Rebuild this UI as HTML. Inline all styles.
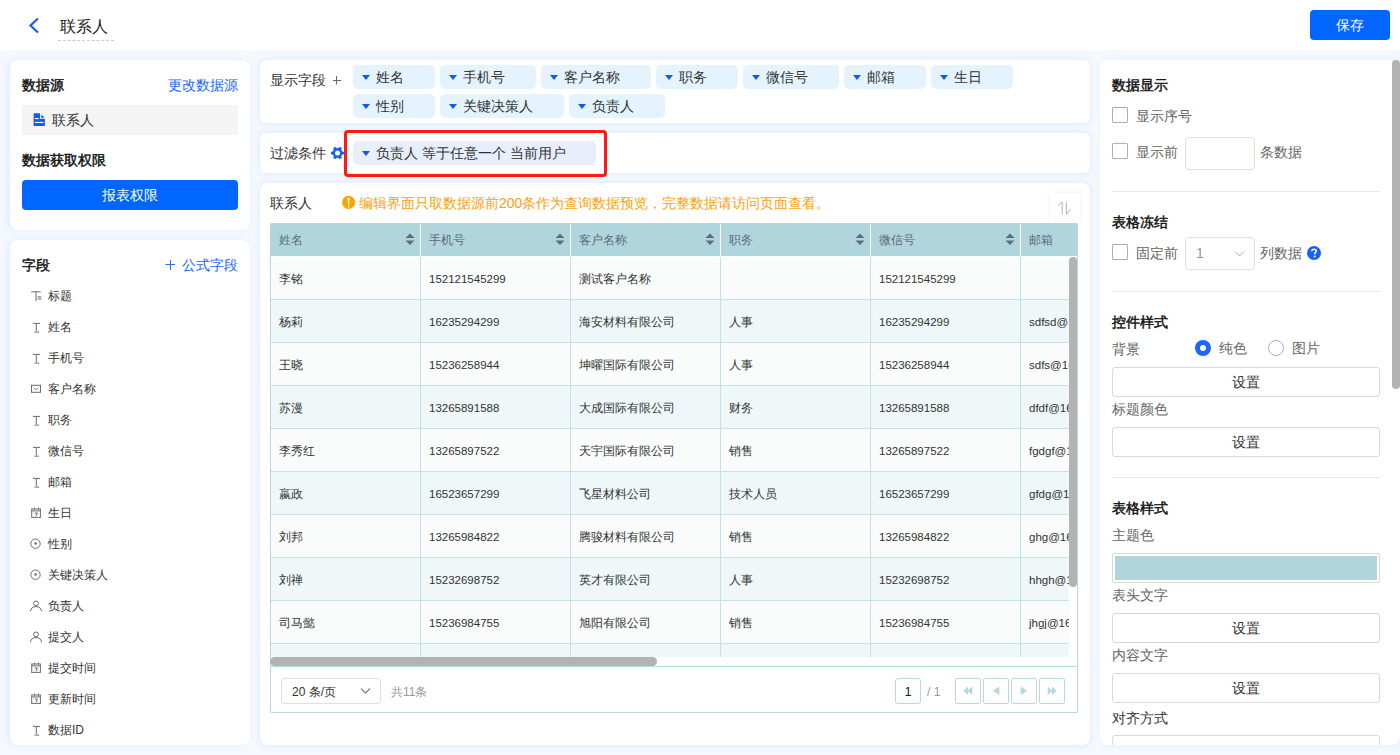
<!DOCTYPE html><html><head><meta charset="utf-8"><style>
*{box-sizing:border-box;margin:0;padding:0}
body{width:1400px;height:755px;overflow:hidden;position:relative;background:#f5f9fe;font-family:"Liberation Sans",sans-serif;color:#333;font-size:14px}
.ab{position:absolute}
.t{position:absolute;white-space:nowrap;line-height:20px}
.card{position:absolute;background:#fff;border-radius:8px;overflow:hidden;box-shadow:0 0 7px 1px rgba(20,140,250,0.11)}
.b{font-weight:400;-webkit-text-stroke:0.45px #111;color:#111}
.chip{position:absolute;height:24px;border-radius:5px;background:#e4f3fe;font-size:14px;line-height:24px;color:#333;white-space:nowrap}
.chip .tri{position:absolute;left:9px;top:10px;width:0;height:0;border-left:4.5px solid transparent;border-right:4.5px solid transparent;border-top:5px solid #0b5cf5}
.chip span{position:absolute;left:23px;top:0}
</style></head><body>
<div class="ab" style="left:0;top:0;width:1400px;height:50px;background:#fff"></div>
<svg class="ab" style="left:27px;top:16px" width="14" height="19" viewBox="0 0 14 19"><path d="M11 2.5 L3.5 9.5 L11 16.5" fill="none" stroke="#1460f7" stroke-width="2.2"/></svg>
<div class="t" style="left:60px;top:17px;font-size:16px;color:#222">联系人</div>
<div class="ab" style="left:58px;top:40px;width:56px;height:0;border-top:1px dashed #ccc"></div>
<div class="ab" style="left:1310px;top:10px;width:80px;height:30px;border-radius:4px;background:#0066ff;color:#fff;font-size:14px;line-height:30px;text-align:center">保存</div>
<div class="card" style="left:10px;top:60px;width:240px;height:170px;box-shadow:-2px 0 6px 1px rgba(20,140,250,0.085)">
<div class="t b" style="left:12px;top:15px">数据源</div>
<div class="t" style="right:12px;top:15px;color:#1a66ff">更改数据源</div>
<div class="ab" style="left:12px;top:45px;width:216px;height:30px;background:#f4f4f5;border-radius:2px"></div>
<svg class="ab" style="left:23px;top:53px" width="12" height="13" viewBox="0 0 12 13"><path d="M0.6 0.3 H7 V5.8 H11.9 V13 H0.6 Z" fill="#0b5ff7"/><path d="M8.3 1.2 L11.4 4.8 H8.3 Z" fill="#0b5ff7"/><rect x="1.8" y="5" width="4" height="1.1" fill="#fff"/><rect x="1.8" y="8.9" width="8.7" height="1.1" fill="#fff"/></svg>
<div class="t" style="left:42px;top:50px;color:#333">联系人</div>
<div class="t b" style="left:12px;top:90px">数据获取权限</div>
<div class="ab" style="left:12px;top:120px;width:216px;height:30px;border-radius:4px;background:#0066ff;color:#fff;line-height:30px;text-align:center">报表权限</div>
</div>
<div class="card" style="left:10px;top:240px;width:240px;height:505px;box-shadow:-2px 0 6px 1px rgba(20,140,250,0.085)">
<div class="t b" style="left:12px;top:15px">字段</div>
<svg class="ab" style="left:155px;top:20px" width="10" height="10" viewBox="0 0 10 10"><path d="M0.5 4.5 H10.5 M5.5 0 V10" stroke="#2a6fff" stroke-width="1"/></svg>
<div class="t" style="right:12px;top:15px;color:#1a66ff">公式字段</div>
<svg class="ab" style="left:18px;top:46.5px" width="18" height="18" viewBox="0 0 18 18"><path d="M3.2 4.8 H12.7 M8 4.8 V14.2 M9.5 9.9 H13.4 M9.5 12 H13.4" stroke="#6b6b6b" stroke-width="1" fill="none"/></svg>
<div class="t" style="left:38px;top:45.5px;font-size:12px;color:#333">标题</div>
<svg class="ab" style="left:18px;top:77.5px" width="18" height="18" viewBox="0 0 18 18"><path d="M5 5.4 H12 M8.3 5.4 V13 M6.4 14.1 H11.1" stroke="#6b6b6b" stroke-width="1" fill="none"/></svg>
<div class="t" style="left:38px;top:76.5px;font-size:12px;color:#333">姓名</div>
<svg class="ab" style="left:18px;top:108.5px" width="18" height="18" viewBox="0 0 18 18"><path d="M5 5.4 H12 M8.3 5.4 V13 M6.4 14.1 H11.1" stroke="#6b6b6b" stroke-width="1" fill="none"/></svg>
<div class="t" style="left:38px;top:107.5px;font-size:12px;color:#333">手机号</div>
<svg class="ab" style="left:18px;top:139.5px" width="18" height="18" viewBox="0 0 18 18"><rect x="3.5" y="5.3" width="9" height="7" stroke="#6b6b6b" fill="none"/><path d="M6 7.8 L8 9.8 L10 7.8" stroke="#6b6b6b" fill="none"/></svg>
<div class="t" style="left:38px;top:138.5px;font-size:12px;color:#333">客户名称</div>
<svg class="ab" style="left:18px;top:170.5px" width="18" height="18" viewBox="0 0 18 18"><path d="M5 5.4 H12 M8.3 5.4 V13 M6.4 14.1 H11.1" stroke="#6b6b6b" stroke-width="1" fill="none"/></svg>
<div class="t" style="left:38px;top:169.5px;font-size:12px;color:#333">职务</div>
<svg class="ab" style="left:18px;top:201.5px" width="18" height="18" viewBox="0 0 18 18"><path d="M5 5.4 H12 M8.3 5.4 V13 M6.4 14.1 H11.1" stroke="#6b6b6b" stroke-width="1" fill="none"/></svg>
<div class="t" style="left:38px;top:200.5px;font-size:12px;color:#333">微信号</div>
<svg class="ab" style="left:18px;top:232.5px" width="18" height="18" viewBox="0 0 18 18"><path d="M5 5.4 H12 M8.3 5.4 V13 M6.4 14.1 H11.1" stroke="#6b6b6b" stroke-width="1" fill="none"/></svg>
<div class="t" style="left:38px;top:231.5px;font-size:12px;color:#333">邮箱</div>
<svg class="ab" style="left:18px;top:263.5px" width="18" height="18" viewBox="0 0 18 18"><rect x="3.7" y="5" width="8.7" height="8.4" stroke="#6b6b6b" fill="none"/><path d="M3.7 6.9 H12.4 M6.5 3.6 V5.5 M10.5 3.6 V5.5 M6.6 9 H9.4 L7.9 12.4" stroke="#6b6b6b" fill="none"/></svg>
<div class="t" style="left:38px;top:262.5px;font-size:12px;color:#333">生日</div>
<svg class="ab" style="left:18px;top:294.5px" width="18" height="18" viewBox="0 0 18 18"><circle cx="7.5" cy="8.7" r="4.7" stroke="#6b6b6b" fill="none"/><circle cx="7.6" cy="8.5" r="1.2" fill="#6b6b6b"/></svg>
<div class="t" style="left:38px;top:293.5px;font-size:12px;color:#333">性别</div>
<svg class="ab" style="left:18px;top:325.5px" width="18" height="18" viewBox="0 0 18 18"><circle cx="7.5" cy="8.7" r="4.7" stroke="#6b6b6b" fill="none"/><circle cx="7.6" cy="8.5" r="1.2" fill="#6b6b6b"/></svg>
<div class="t" style="left:38px;top:324.5px;font-size:12px;color:#333">关键决策人</div>
<svg class="ab" style="left:18px;top:356.5px" width="18" height="18" viewBox="0 0 18 18"><circle cx="8" cy="6.4" r="2.4" stroke="#6b6b6b" fill="none"/><path d="M2.6 14.3 C2.6 11.5 4.5 9.6 8 9.6 C11.5 9.6 13.4 11.5 13.4 14.3" stroke="#6b6b6b" fill="none"/></svg>
<div class="t" style="left:38px;top:355.5px;font-size:12px;color:#333">负责人</div>
<svg class="ab" style="left:18px;top:387.5px" width="18" height="18" viewBox="0 0 18 18"><circle cx="8" cy="6.4" r="2.4" stroke="#6b6b6b" fill="none"/><path d="M2.6 14.3 C2.6 11.5 4.5 9.6 8 9.6 C11.5 9.6 13.4 11.5 13.4 14.3" stroke="#6b6b6b" fill="none"/></svg>
<div class="t" style="left:38px;top:386.5px;font-size:12px;color:#333">提交人</div>
<svg class="ab" style="left:18px;top:418.5px" width="18" height="18" viewBox="0 0 18 18"><rect x="3.7" y="5" width="8.7" height="8.4" stroke="#6b6b6b" fill="none"/><path d="M3.7 6.9 H12.4 M6.5 3.6 V5.5 M10.5 3.6 V5.5 M6.6 9 H9.4 L7.9 12.4" stroke="#6b6b6b" fill="none"/></svg>
<div class="t" style="left:38px;top:417.5px;font-size:12px;color:#333">提交时间</div>
<svg class="ab" style="left:18px;top:449.5px" width="18" height="18" viewBox="0 0 18 18"><rect x="3.7" y="5" width="8.7" height="8.4" stroke="#6b6b6b" fill="none"/><path d="M3.7 6.9 H12.4 M6.5 3.6 V5.5 M10.5 3.6 V5.5 M6.6 9 H9.4 L7.9 12.4" stroke="#6b6b6b" fill="none"/></svg>
<div class="t" style="left:38px;top:448.5px;font-size:12px;color:#333">更新时间</div>
<svg class="ab" style="left:18px;top:480.5px" width="18" height="18" viewBox="0 0 18 18"><path d="M5 5.4 H12 M8.3 5.4 V13 M6.4 14.1 H11.1" stroke="#6b6b6b" stroke-width="1" fill="none"/></svg>
<div class="t" style="left:38px;top:479.5px;font-size:12px;color:#333">数据ID</div>
</div>
<div class="card" style="left:260px;top:60px;width:830px;height:63px;border-radius:6px">
<div class="t" style="left:10px;top:10px">显示字段</div>
<svg class="ab" style="left:73px;top:16px" width="9" height="9" viewBox="0 0 9 9"><path d="M0 4.5 H8 M3.5 0 V8.5" stroke="#666" stroke-width="1"/></svg>
</div>
<div class="chip" style="left:353px;top:65px;width:82px"><i class="tri"></i><span>姓名</span></div>
<div class="chip" style="left:440px;top:65px;width:96px"><i class="tri"></i><span>手机号</span></div>
<div class="chip" style="left:541px;top:65px;width:110px"><i class="tri"></i><span>客户名称</span></div>
<div class="chip" style="left:656px;top:65px;width:82px"><i class="tri"></i><span>职务</span></div>
<div class="chip" style="left:743px;top:65px;width:96px"><i class="tri"></i><span>微信号</span></div>
<div class="chip" style="left:844px;top:65px;width:82px"><i class="tri"></i><span>邮箱</span></div>
<div class="chip" style="left:931px;top:65px;width:82px"><i class="tri"></i><span>生日</span></div>
<div class="chip" style="left:353px;top:94px;width:82px"><i class="tri"></i><span>性别</span></div>
<div class="chip" style="left:440px;top:94px;width:124px"><i class="tri"></i><span>关键决策人</span></div>
<div class="chip" style="left:569px;top:94px;width:96px"><i class="tri"></i><span>负责人</span></div>
<div class="card" style="left:260px;top:133px;width:830px;height:40px;border-radius:6px">
<div class="t" style="left:10px;top:10px">过滤条件</div>
</div>
<svg class="ab" style="left:331px;top:147px" width="13" height="12" viewBox="0 0 13 12"><g fill="#0f63f7"><circle cx="6.5" cy="6" r="4.9"/><circle cx="11.50" cy="6.00" r="1.6"/><circle cx="9.00" cy="10.33" r="1.6"/><circle cx="4.00" cy="10.33" r="1.6"/><circle cx="1.50" cy="6.00" r="1.6"/><circle cx="4.00" cy="1.67" r="1.6"/><circle cx="9.00" cy="1.67" r="1.6"/></g><circle cx="6.5" cy="6" r="2.5" fill="#fff"/></svg>
<div class="ab" style="left:344px;top:130px;width:263px;height:46.5px;border:3px solid #fc1a12;border-radius:4px"></div>
<div class="chip" style="left:353px;top:141px;width:243px;background:#e8eefb"><i class="tri"></i><span>负责人 等于任意一个 当前用户</span></div>
<div class="card" style="left:260px;top:183px;width:830px;height:562px">
<div class="t" style="left:10px;top:10px">联系人</div>
<svg class="ab" style="left:82px;top:13px" width="14" height="14" viewBox="0 0 14 14"><circle cx="6.6" cy="6.4" r="6.5" fill="#ffa304"/><path d="M5.6 1.8 H7.6 L7.1 9.2 H6.1 Z" fill="#fff"/><rect x="5.9" y="10.2" width="1.4" height="1.3" fill="#fff"/></svg>
<div class="t" style="left:99px;top:10px;color:#ffa010">编辑界面只取数据源前200条作为查询数据预览，完整数据请访问页面查看。</div>
<div class="ab" style="left:790px;top:10px;width:30px;height:30px;background:#fff;box-shadow:0 0 4px rgba(0,0,0,0.08)"></div>
<svg class="ab" style="left:798px;top:18px" width="14" height="14" viewBox="0 0 14 14"><path d="M0.4 4.6 L4.2 1 V13.2 M8.4 1 V13.2 L12.6 8.3" stroke="#a8a8a8" stroke-width="0.9" fill="none"/></svg>
</div>
<div class="ab" style="left:270px;top:223px;width:808px;height:490px;border:1px solid #b9d9df;border-radius:2px;background:#fff"></div>
<div class="ab" style="left:270px;top:223px;width:807px;height:33px;background:#b0d5dc;border-radius:2px 2px 0 0"></div>
<div class="t" style="left:279px;top:230px;font-size:12px;color:#5b6a7d">姓名</div>
<svg class="ab" style="left:405px;top:233px" width="10" height="13" viewBox="0 0 10 13"><path d="M5 0.5 L9.5 5 H0.5 Z M0.5 7.5 H9.5 L5 12 Z" fill="#5e6b80"/></svg>
<div class="ab" style="left:420px;top:224px;width:1px;height:32px;background:#fff"></div>
<div class="t" style="left:429px;top:230px;font-size:12px;color:#5b6a7d">手机号</div>
<svg class="ab" style="left:555px;top:233px" width="10" height="13" viewBox="0 0 10 13"><path d="M5 0.5 L9.5 5 H0.5 Z M0.5 7.5 H9.5 L5 12 Z" fill="#5e6b80"/></svg>
<div class="ab" style="left:570px;top:224px;width:1px;height:32px;background:#fff"></div>
<div class="t" style="left:579px;top:230px;font-size:12px;color:#5b6a7d">客户名称</div>
<svg class="ab" style="left:705px;top:233px" width="10" height="13" viewBox="0 0 10 13"><path d="M5 0.5 L9.5 5 H0.5 Z M0.5 7.5 H9.5 L5 12 Z" fill="#5e6b80"/></svg>
<div class="ab" style="left:720px;top:224px;width:1px;height:32px;background:#fff"></div>
<div class="t" style="left:729px;top:230px;font-size:12px;color:#5b6a7d">职务</div>
<svg class="ab" style="left:855px;top:233px" width="10" height="13" viewBox="0 0 10 13"><path d="M5 0.5 L9.5 5 H0.5 Z M0.5 7.5 H9.5 L5 12 Z" fill="#5e6b80"/></svg>
<div class="ab" style="left:870px;top:224px;width:1px;height:32px;background:#fff"></div>
<div class="t" style="left:879px;top:230px;font-size:12px;color:#5b6a7d">微信号</div>
<svg class="ab" style="left:1005px;top:233px" width="10" height="13" viewBox="0 0 10 13"><path d="M5 0.5 L9.5 5 H0.5 Z M0.5 7.5 H9.5 L5 12 Z" fill="#5e6b80"/></svg>
<div class="ab" style="left:1020px;top:224px;width:1px;height:32px;background:#fff"></div>
<div class="t" style="left:1029px;top:230px;font-size:12px;color:#5b6a7d">邮箱</div>
<div class="ab" style="left:270px;top:257px;width:799px;height:400px;overflow:hidden">
<div class="ab" style="left:0;top:0px;width:799px;height:43px;background:#fafcfc;border-bottom:1px solid #c6e0e5"></div>
<div class="ab" style="left:0px;top:0px;width:1px;height:43px;background:#b9d9df"></div>
<div class="t" style="left:9px;top:12px;font-size:12px;color:#333">李铭</div>
<div class="ab" style="left:150px;top:0px;width:1px;height:43px;background:#c6e0e5"></div>
<div class="t" style="left:159px;top:12px;font-size:11.5px;color:#333">152121545299</div>
<div class="ab" style="left:300px;top:0px;width:1px;height:43px;background:#c6e0e5"></div>
<div class="t" style="left:309px;top:12px;font-size:12px;color:#333">测试客户名称</div>
<div class="ab" style="left:450px;top:0px;width:1px;height:43px;background:#c6e0e5"></div>
<div class="ab" style="left:600px;top:0px;width:1px;height:43px;background:#c6e0e5"></div>
<div class="t" style="left:609px;top:12px;font-size:11.5px;color:#333">152121545299</div>
<div class="ab" style="left:750px;top:0px;width:1px;height:43px;background:#c6e0e5"></div>
<div class="ab" style="left:0;top:43px;width:799px;height:43px;background:#eff7f9;border-bottom:1px solid #c6e0e5"></div>
<div class="ab" style="left:0px;top:43px;width:1px;height:43px;background:#b9d9df"></div>
<div class="t" style="left:9px;top:55px;font-size:12px;color:#333">杨莉</div>
<div class="ab" style="left:150px;top:43px;width:1px;height:43px;background:#c6e0e5"></div>
<div class="t" style="left:159px;top:55px;font-size:11.5px;color:#333">16235294299</div>
<div class="ab" style="left:300px;top:43px;width:1px;height:43px;background:#c6e0e5"></div>
<div class="t" style="left:309px;top:55px;font-size:12px;color:#333">海安材料有限公司</div>
<div class="ab" style="left:450px;top:43px;width:1px;height:43px;background:#c6e0e5"></div>
<div class="t" style="left:459px;top:55px;font-size:12px;color:#333">人事</div>
<div class="ab" style="left:600px;top:43px;width:1px;height:43px;background:#c6e0e5"></div>
<div class="t" style="left:609px;top:55px;font-size:11.5px;color:#333">16235294299</div>
<div class="ab" style="left:750px;top:43px;width:1px;height:43px;background:#c6e0e5"></div>
<div class="t" style="left:759px;top:55px;font-size:11.5px;color:#333">sdfsd@163.com</div>
<div class="ab" style="left:0;top:86px;width:799px;height:43px;background:#fafcfc;border-bottom:1px solid #c6e0e5"></div>
<div class="ab" style="left:0px;top:86px;width:1px;height:43px;background:#b9d9df"></div>
<div class="t" style="left:9px;top:98px;font-size:12px;color:#333">王晓</div>
<div class="ab" style="left:150px;top:86px;width:1px;height:43px;background:#c6e0e5"></div>
<div class="t" style="left:159px;top:98px;font-size:11.5px;color:#333">15236258944</div>
<div class="ab" style="left:300px;top:86px;width:1px;height:43px;background:#c6e0e5"></div>
<div class="t" style="left:309px;top:98px;font-size:12px;color:#333">坤曜国际有限公司</div>
<div class="ab" style="left:450px;top:86px;width:1px;height:43px;background:#c6e0e5"></div>
<div class="t" style="left:459px;top:98px;font-size:12px;color:#333">人事</div>
<div class="ab" style="left:600px;top:86px;width:1px;height:43px;background:#c6e0e5"></div>
<div class="t" style="left:609px;top:98px;font-size:11.5px;color:#333">15236258944</div>
<div class="ab" style="left:750px;top:86px;width:1px;height:43px;background:#c6e0e5"></div>
<div class="t" style="left:759px;top:98px;font-size:11.5px;color:#333">sdfs@163.com</div>
<div class="ab" style="left:0;top:129px;width:799px;height:43px;background:#eff7f9;border-bottom:1px solid #c6e0e5"></div>
<div class="ab" style="left:0px;top:129px;width:1px;height:43px;background:#b9d9df"></div>
<div class="t" style="left:9px;top:141px;font-size:12px;color:#333">苏漫</div>
<div class="ab" style="left:150px;top:129px;width:1px;height:43px;background:#c6e0e5"></div>
<div class="t" style="left:159px;top:141px;font-size:11.5px;color:#333">13265891588</div>
<div class="ab" style="left:300px;top:129px;width:1px;height:43px;background:#c6e0e5"></div>
<div class="t" style="left:309px;top:141px;font-size:12px;color:#333">大成国际有限公司</div>
<div class="ab" style="left:450px;top:129px;width:1px;height:43px;background:#c6e0e5"></div>
<div class="t" style="left:459px;top:141px;font-size:12px;color:#333">财务</div>
<div class="ab" style="left:600px;top:129px;width:1px;height:43px;background:#c6e0e5"></div>
<div class="t" style="left:609px;top:141px;font-size:11.5px;color:#333">13265891588</div>
<div class="ab" style="left:750px;top:129px;width:1px;height:43px;background:#c6e0e5"></div>
<div class="t" style="left:759px;top:141px;font-size:11.5px;color:#333">dfdf@163.com</div>
<div class="ab" style="left:0;top:172px;width:799px;height:43px;background:#fafcfc;border-bottom:1px solid #c6e0e5"></div>
<div class="ab" style="left:0px;top:172px;width:1px;height:43px;background:#b9d9df"></div>
<div class="t" style="left:9px;top:184px;font-size:12px;color:#333">李秀红</div>
<div class="ab" style="left:150px;top:172px;width:1px;height:43px;background:#c6e0e5"></div>
<div class="t" style="left:159px;top:184px;font-size:11.5px;color:#333">13265897522</div>
<div class="ab" style="left:300px;top:172px;width:1px;height:43px;background:#c6e0e5"></div>
<div class="t" style="left:309px;top:184px;font-size:12px;color:#333">天宇国际有限公司</div>
<div class="ab" style="left:450px;top:172px;width:1px;height:43px;background:#c6e0e5"></div>
<div class="t" style="left:459px;top:184px;font-size:12px;color:#333">销售</div>
<div class="ab" style="left:600px;top:172px;width:1px;height:43px;background:#c6e0e5"></div>
<div class="t" style="left:609px;top:184px;font-size:11.5px;color:#333">13265897522</div>
<div class="ab" style="left:750px;top:172px;width:1px;height:43px;background:#c6e0e5"></div>
<div class="t" style="left:759px;top:184px;font-size:11.5px;color:#333">fgdgf@163.com</div>
<div class="ab" style="left:0;top:215px;width:799px;height:43px;background:#eff7f9;border-bottom:1px solid #c6e0e5"></div>
<div class="ab" style="left:0px;top:215px;width:1px;height:43px;background:#b9d9df"></div>
<div class="t" style="left:9px;top:227px;font-size:12px;color:#333">嬴政</div>
<div class="ab" style="left:150px;top:215px;width:1px;height:43px;background:#c6e0e5"></div>
<div class="t" style="left:159px;top:227px;font-size:11.5px;color:#333">16523657299</div>
<div class="ab" style="left:300px;top:215px;width:1px;height:43px;background:#c6e0e5"></div>
<div class="t" style="left:309px;top:227px;font-size:12px;color:#333">飞星材料公司</div>
<div class="ab" style="left:450px;top:215px;width:1px;height:43px;background:#c6e0e5"></div>
<div class="t" style="left:459px;top:227px;font-size:12px;color:#333">技术人员</div>
<div class="ab" style="left:600px;top:215px;width:1px;height:43px;background:#c6e0e5"></div>
<div class="t" style="left:609px;top:227px;font-size:11.5px;color:#333">16523657299</div>
<div class="ab" style="left:750px;top:215px;width:1px;height:43px;background:#c6e0e5"></div>
<div class="t" style="left:759px;top:227px;font-size:11.5px;color:#333">gfdg@163.com</div>
<div class="ab" style="left:0;top:258px;width:799px;height:43px;background:#fafcfc;border-bottom:1px solid #c6e0e5"></div>
<div class="ab" style="left:0px;top:258px;width:1px;height:43px;background:#b9d9df"></div>
<div class="t" style="left:9px;top:270px;font-size:12px;color:#333">刘邦</div>
<div class="ab" style="left:150px;top:258px;width:1px;height:43px;background:#c6e0e5"></div>
<div class="t" style="left:159px;top:270px;font-size:11.5px;color:#333">13265984822</div>
<div class="ab" style="left:300px;top:258px;width:1px;height:43px;background:#c6e0e5"></div>
<div class="t" style="left:309px;top:270px;font-size:12px;color:#333">腾骏材料有限公司</div>
<div class="ab" style="left:450px;top:258px;width:1px;height:43px;background:#c6e0e5"></div>
<div class="t" style="left:459px;top:270px;font-size:12px;color:#333">销售</div>
<div class="ab" style="left:600px;top:258px;width:1px;height:43px;background:#c6e0e5"></div>
<div class="t" style="left:609px;top:270px;font-size:11.5px;color:#333">13265984822</div>
<div class="ab" style="left:750px;top:258px;width:1px;height:43px;background:#c6e0e5"></div>
<div class="t" style="left:759px;top:270px;font-size:11.5px;color:#333">ghg@163.com</div>
<div class="ab" style="left:0;top:301px;width:799px;height:43px;background:#eff7f9;border-bottom:1px solid #c6e0e5"></div>
<div class="ab" style="left:0px;top:301px;width:1px;height:43px;background:#b9d9df"></div>
<div class="t" style="left:9px;top:313px;font-size:12px;color:#333">刘禅</div>
<div class="ab" style="left:150px;top:301px;width:1px;height:43px;background:#c6e0e5"></div>
<div class="t" style="left:159px;top:313px;font-size:11.5px;color:#333">15232698752</div>
<div class="ab" style="left:300px;top:301px;width:1px;height:43px;background:#c6e0e5"></div>
<div class="t" style="left:309px;top:313px;font-size:12px;color:#333">英才有限公司</div>
<div class="ab" style="left:450px;top:301px;width:1px;height:43px;background:#c6e0e5"></div>
<div class="t" style="left:459px;top:313px;font-size:12px;color:#333">人事</div>
<div class="ab" style="left:600px;top:301px;width:1px;height:43px;background:#c6e0e5"></div>
<div class="t" style="left:609px;top:313px;font-size:11.5px;color:#333">15232698752</div>
<div class="ab" style="left:750px;top:301px;width:1px;height:43px;background:#c6e0e5"></div>
<div class="t" style="left:759px;top:313px;font-size:11.5px;color:#333">hhgh@163.com</div>
<div class="ab" style="left:0;top:344px;width:799px;height:43px;background:#fafcfc;border-bottom:1px solid #c6e0e5"></div>
<div class="ab" style="left:0px;top:344px;width:1px;height:43px;background:#b9d9df"></div>
<div class="t" style="left:9px;top:356px;font-size:12px;color:#333">司马懿</div>
<div class="ab" style="left:150px;top:344px;width:1px;height:43px;background:#c6e0e5"></div>
<div class="t" style="left:159px;top:356px;font-size:11.5px;color:#333">15236984755</div>
<div class="ab" style="left:300px;top:344px;width:1px;height:43px;background:#c6e0e5"></div>
<div class="t" style="left:309px;top:356px;font-size:12px;color:#333">旭阳有限公司</div>
<div class="ab" style="left:450px;top:344px;width:1px;height:43px;background:#c6e0e5"></div>
<div class="t" style="left:459px;top:356px;font-size:12px;color:#333">销售</div>
<div class="ab" style="left:600px;top:344px;width:1px;height:43px;background:#c6e0e5"></div>
<div class="t" style="left:609px;top:356px;font-size:11.5px;color:#333">15236984755</div>
<div class="ab" style="left:750px;top:344px;width:1px;height:43px;background:#c6e0e5"></div>
<div class="t" style="left:759px;top:356px;font-size:11.5px;color:#333">jhgj@163.com</div>
<div class="ab" style="left:0;top:387px;width:799px;height:43px;background:#eff7f9;border-bottom:1px solid #c6e0e5"></div>
<div class="ab" style="left:0px;top:387px;width:1px;height:43px;background:#b9d9df"></div>
<div class="t" style="left:9px;top:399px;font-size:12px;color:#333">曹操</div>
<div class="ab" style="left:150px;top:387px;width:1px;height:43px;background:#c6e0e5"></div>
<div class="t" style="left:159px;top:399px;font-size:11.5px;color:#333">15236984756</div>
<div class="ab" style="left:300px;top:387px;width:1px;height:43px;background:#c6e0e5"></div>
<div class="t" style="left:309px;top:399px;font-size:12px;color:#333">曹魏有限公司</div>
<div class="ab" style="left:450px;top:387px;width:1px;height:43px;background:#c6e0e5"></div>
<div class="t" style="left:459px;top:399px;font-size:12px;color:#333">销售</div>
<div class="ab" style="left:600px;top:387px;width:1px;height:43px;background:#c6e0e5"></div>
<div class="t" style="left:609px;top:399px;font-size:11.5px;color:#333">15236984756</div>
<div class="ab" style="left:750px;top:387px;width:1px;height:43px;background:#c6e0e5"></div>
<div class="t" style="left:759px;top:399px;font-size:11.5px;color:#333">cc@163.com</div>
</div>
<div class="ab" style="left:1069px;top:257px;width:8px;height:330px;background:#b3b3b3;border-radius:4px"></div>
<div class="ab" style="left:270px;top:657px;width:387px;height:9px;background:#b3b3b3;border-radius:4.5px"></div>
<div class="ab" style="left:270px;top:666px;width:808px;height:1px;background:#b9d9df"></div>
<div class="ab" style="left:281px;top:678px;width:100px;height:26px;border:1px solid #dcdfe6;border-radius:3px;background:#fff"></div>
<div class="t" style="left:292px;top:682px;font-size:12px;color:#333">20 条/页</div>
<svg class="ab" style="left:360px;top:687px" width="11" height="8" viewBox="0 0 11 8"><path d="M1 1.5 L5.5 6 L10 1.5" stroke="#888" stroke-width="1.3" fill="none"/></svg>
<div class="t" style="left:391px;top:682px;font-size:12px;color:#999">共11条</div>
<div class="ab" style="left:895px;top:678px;width:26px;height:26px;border:1px solid #b9d9df;border-radius:3px;background:#fff;font-size:12px;line-height:25px;text-align:center;color:#111"><span style="position:relative;top:1px">1</span></div>
<div class="t" style="left:927px;top:682px;font-size:12px;color:#999">/ 1</div>
<div class="ab" style="left:955px;top:678px;width:26px;height:26px;border:1px solid #b9d9df;border-radius:2px;background:#fff"></div>
<svg class="ab" style="left:960px;top:684px" width="16" height="13" viewBox="0 0 16 13"><path d="M8 2.6 L3.3 6.8 L8 11 Z M12.3 2.6 L7.6 6.8 L12.3 11 Z" fill="#b5d8df"/></svg>
<div class="ab" style="left:983px;top:678px;width:26px;height:26px;border:1px solid #b9d9df;border-radius:2px;background:#fff"></div>
<svg class="ab" style="left:988px;top:684px" width="16" height="13" viewBox="0 0 16 13"><path d="M11.3 2.6 L4.8 6.8 L11.3 11 Z" fill="#b5d8df"/></svg>
<div class="ab" style="left:1011px;top:678px;width:26px;height:26px;border:1px solid #b9d9df;border-radius:2px;background:#fff"></div>
<svg class="ab" style="left:1016px;top:684px" width="16" height="13" viewBox="0 0 16 13"><path d="M4.7 2.6 L11.2 6.8 L4.7 11 Z" fill="#b5d8df"/></svg>
<div class="ab" style="left:1039px;top:678px;width:26px;height:26px;border:1px solid #b9d9df;border-radius:2px;background:#fff"></div>
<svg class="ab" style="left:1044px;top:684px" width="16" height="13" viewBox="0 0 16 13"><path d="M3.7 2.6 L8.4 6.8 L3.7 11 Z M8 2.6 L12.7 6.8 L8 11 Z" fill="#b5d8df"/></svg>
<div class="card" style="left:1100px;top:60px;width:300px;height:685px;box-shadow:3px 0 6px 1px rgba(20,170,250,0.09)">
<div class="t" style="left:12px;top:15px;-webkit-text-stroke:0.45px #111;color:#111">数据显示</div>
<div class="ab" style="left:12px;top:47px;width:16px;height:16px;border:1px solid #a9afbd;border-radius:1px;background:#fff"></div>
<div class="t" style="left:36px;top:46px;color:#666">显示序号</div>
<div class="ab" style="left:12px;top:83px;width:16px;height:16px;border:1px solid #a9afbd;border-radius:1px;background:#fff"></div>
<div class="t" style="left:36px;top:82px;color:#666">显示前</div>
<div class="ab" style="left:85px;top:77px;width:70px;height:33px;border:1px solid #dedede;border-radius:4px"></div>
<div class="t" style="left:160px;top:82px;color:#666">条数据</div>
<div class="ab" style="left:12px;top:131px;width:268px;height:1px;background:#e8e8e8"></div>
<div class="t" style="left:12px;top:152px;-webkit-text-stroke:0.45px #111;color:#111">表格冻结</div>
<div class="ab" style="left:12px;top:184px;width:16px;height:16px;border:1px solid #a9afbd;border-radius:1px;background:#fff"></div>
<div class="t" style="left:36px;top:183px;color:#666">固定前</div>
<div class="ab" style="left:85px;top:177px;width:70px;height:33px;border:1px solid #dedede;border-radius:4px"></div>
<div class="t" style="left:96px;top:183px;color:#999">1</div>
<svg class="ab" style="left:134px;top:190px" width="11" height="8" viewBox="0 0 11 8"><path d="M1 1.5 L5.5 6 L10 1.5" stroke="#aaa" stroke-width="1" fill="none"/></svg>
<div class="t" style="left:160px;top:183px;color:#666">列数据</div>
<svg class="ab" style="left:207px;top:186px" width="14" height="14" viewBox="0 0 14 14"><circle cx="7" cy="7" r="7" fill="#1961f5"/><path d="M4.8 5.3 C4.8 3.9 5.8 3.2 7 3.2 C8.3 3.2 9.2 4 9.2 5.1 C9.2 6.5 7.6 6.6 7.6 8.2" stroke="#fff" stroke-width="1.6" fill="none"/><circle cx="7.6" cy="10.5" r="0.95" fill="#fff"/></svg>
<div class="ab" style="left:12px;top:231px;width:268px;height:1px;background:#e8e8e8"></div>
<div class="t" style="left:12px;top:252px;-webkit-text-stroke:0.45px #111;color:#111">控件样式</div>
<div class="t" style="left:12px;top:279px;color:#666">背景</div>
<div class="ab" style="left:95px;top:280px;width:16px;height:16px;border-radius:50%;border:5px solid #1a66ff;background:#fff"></div>
<div class="t" style="left:119px;top:278px;color:#666">纯色</div>
<div class="ab" style="left:168px;top:280px;width:16px;height:16px;border-radius:50%;border:1px solid #a9afbd;background:#fff"></div>
<div class="t" style="left:192px;top:278px;color:#666">图片</div>
<div class="ab" style="left:12px;top:307px;width:268px;height:30px;border:1px solid #d9d9d9;border-radius:3px;background:#fff;text-align:center;line-height:28px;color:#333">设置</div>
<div class="t" style="left:12px;top:339px;color:#666">标题颜色</div>
<div class="ab" style="left:12px;top:367px;width:268px;height:30px;border:1px solid #d9d9d9;border-radius:3px;background:#fff;text-align:center;line-height:28px;color:#333">设置</div>
<div class="ab" style="left:12px;top:417px;width:268px;height:1px;background:#e8e8e8"></div>
<div class="t" style="left:12px;top:438px;-webkit-text-stroke:0.45px #111;color:#111">表格样式</div>
<div class="t" style="left:12px;top:465px;color:#666">主题色</div>
<div class="ab" style="left:12px;top:493px;width:268px;height:30px;border:1px solid #d9d9d9;border-radius:2px;background:#fff"></div>
<div class="ab" style="left:15px;top:496px;width:262px;height:24px;background:#b0d5dc"></div>
<div class="t" style="left:12px;top:525px;color:#666">表头文字</div>
<div class="ab" style="left:12px;top:553px;width:268px;height:30px;border:1px solid #d9d9d9;border-radius:3px;background:#fff;text-align:center;line-height:28px;color:#333">设置</div>
<div class="t" style="left:12px;top:585px;color:#666">内容文字</div>
<div class="ab" style="left:12px;top:613px;width:268px;height:30px;border:1px solid #d9d9d9;border-radius:3px;background:#fff;text-align:center;line-height:28px;color:#333">设置</div>
<div class="t" style="left:12px;top:648px;color:#333">对齐方式</div>
<div class="ab" style="left:12px;top:675px;width:268px;height:30px;border:1px solid #d9d9d9;border-radius:3px;background:#fff;text-align:center;line-height:28px;color:#333"></div>
</div>
<div class="ab" style="left:1392px;top:60px;width:8px;height:329px;background:#b3b3b3;border-radius:4px"></div>
</body></html>
